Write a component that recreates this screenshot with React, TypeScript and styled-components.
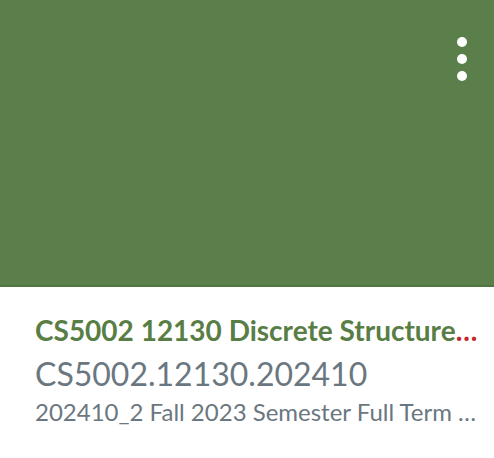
import React from "react";
import styled, { createGlobalStyle } from "styled-components";

const Global = createGlobalStyle`
  html, body { margin: 0; padding: 0; background: #ffffff; }
  body { font-family: Lato, "Noto Sans", sans-serif; }
`;

const Card = styled.div`
  width: 494px;
  height: 458px;
  display: flex;
  flex-direction: column;
  background: #ffffff;
`;

const Hero = styled.div<{ $color: string }>`
  box-sizing: border-box;
  height: 287px;
  flex-shrink: 0;
  background: ${(p) => p.$color};
  border-bottom: 2px solid #52743f;
  display: flex;
  justify-content: flex-end;
  align-items: flex-start;
  padding: 37px 27px 0 0;
`;

const MenuButton = styled.button`
  background: none;
  border: none;
  padding: 0;
  display: flex;
  flex-direction: column;
  gap: 7px;
  cursor: pointer;
`;

const Dot = styled.span`
  width: 10px;
  height: 10px;
  border-radius: 50%;
  background: #ffffff;
`;

const Body = styled.div`
  display: flex;
  flex-direction: column;
  padding: 26px 18px 0 35px;
`;

const Title = styled.div<{ $color: string }>`
  display: flex;
  font-size: 28px;
  font-weight: 700;
  line-height: 34px;
  color: ${(p) => p.$color};
  white-space: nowrap;
`;

const Ellipsis = styled.span`
  color: #c0282a;
`;

const Code = styled.div`
  font-size: 32px;
  line-height: 38px;
  margin-top: 8px;
  color: #6b7780;
  white-space: nowrap;
`;

const Term = styled.div`
  font-size: 24px;
  line-height: 30px;
  margin-top: 4px;
  color: #6b7780;
  white-space: nowrap;
`;

export default function App() {
  return (
    <>
      <Global />
      <Card>
        <Hero $color="#5b7f4b">
          <MenuButton aria-label="Course options">
            <Dot />
            <Dot />
            <Dot />
          </MenuButton>
        </Hero>
        <Body>
          <Title $color="#587e45">
            CS5002 12130 Discrete Structure<Ellipsis>…</Ellipsis>
          </Title>
          <Code>CS5002.12130.202410</Code>
          <Term>202410_2 Fall 2023 Semester Full Term …</Term>
        </Body>
      </Card>
    </>
  );
}
